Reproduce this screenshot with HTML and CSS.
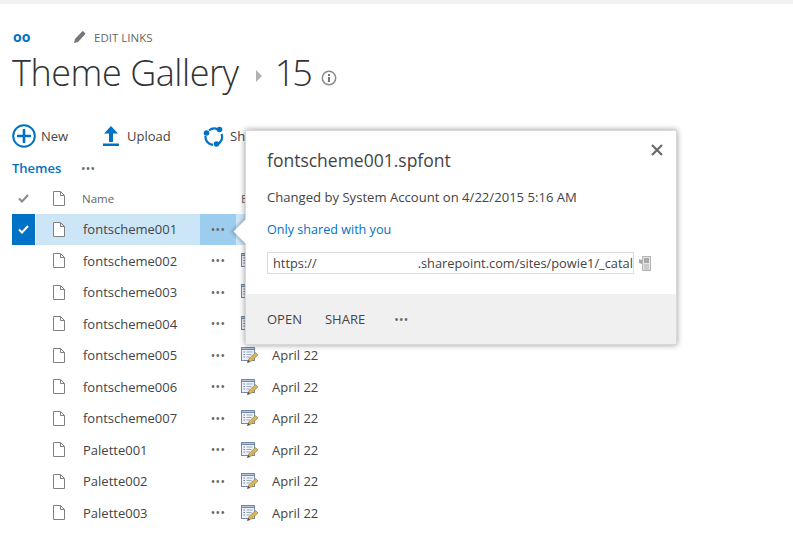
FILE: index.html
```html
<!DOCTYPE html>
<html lang="en">
  <head>
    <meta charset="UTF-8" />
    <title>Theme Gallery</title>
    <link rel="stylesheet" href="styles.css">
  </head>
  <body>
    <svg class="defs" width="0" height="0">
      <symbol id="doc" viewBox="0 0 12 15">
        <path d="M.5 .5H7.500L11.500 4.500V14.500H.5Z M7.500 .5V4.500H11.500" fill="#fff" stroke="#808080" />
      </symbol>
      <symbol id="edit" viewBox="0 0 18 18">
        <rect x=".5" y="1.5" width="13" height="13" fill="#eef2f8" stroke="#7488a8" />
        <rect x=".5" y="1.5" width="13" height="2" fill="#b4c4da" stroke="#7488a8" />
        <path d="M2.500 6h1.500M2.500 8.500h1.500M2.500 11h1.500" stroke="#6d7f9c" />
        <path d="M5.500 6h6M5.500 8.500h5M5.500 11h3" stroke="#9aa9bf" />
        <path d="M7 15.500l1-3 6.500-6 2.500 2.500-6.500 6z" fill="#d9b45a" stroke="#8f7a45" stroke-width=".6" />
        <path d="M6 17l1-3 2.300 2z" fill="#4a4a4a" />
      </symbol>
    </svg>

    <div class="top-strip"></div>

    <div class="nav">
      <span class="nav-logo">oo</span>
      <span class="edit-links">
        <svg width="14" height="14" viewBox="0 0 14 14"><path d="M1 13l1-4 7-7.500a1 1 0 0 1 1.500 0l1.500 1.500a1 1 0 0 1 0 1.500L5 12z" fill="#777" /></svg>
        EDIT LINKS
      </span>
    </div>

    <div class="title-row">
      <h1>Theme Gallery</h1>
      <svg class="crumb" width="6" height="12" viewBox="0 0 6 12"><path d="M0 0l6 6-6 6z" fill="#b1b1b1" /></svg>
      <span class="title-num">15</span>
      <svg class="info" width="16" height="16" viewBox="0 0 16 16">
        <circle cx="8" cy="8" r="6.700" fill="none" stroke="#8a8a8a" stroke-width="1.500" />
        <rect x="7" y="7" width="2" height="5" fill="#777" />
        <rect x="7" y="4" width="2" height="2" fill="#777" />
      </svg>
    </div>

    <div class="toolbar">
      <span class="tool tool-new">
        <svg width="24" height="24" viewBox="0 0 24 24">
          <circle cx="12" cy="12" r="10.800" fill="none" stroke="#0072c6" stroke-width="2" />
          <path d="M12 5v14M5 12h14" stroke="#0072c6" stroke-width="2.600" />
        </svg>
        New
      </span>
      <span class="tool tool-upload">
        <svg width="16" height="20" viewBox="0 0 16 20">
          <path d="M8 0l7 7.500h-5V16H6V7.500H1z M0 17.500h16V20H0z" fill="#0072c6" />
        </svg>
        Upload
      </span>
      <span class="tool tool-share">
        <svg width="21" height="21" viewBox="0 0 21 21">
          <path d="M6 4.500a8 8 0 0 1 9-1M18.500 8a8 8 0 0 1-3.500 10M10 18.800a8 8 0 0 1-7.500-9" fill="none" stroke="#0072c6" stroke-width="2.200" />
          <circle cx="16.500" cy="3.500" r="2.800" fill="#0072c6" />
          <circle cx="3.500" cy="7" r="2.800" fill="#0072c6" />
          <circle cx="13.500" cy="18" r="2.800" fill="#0072c6" />
        </svg>
        Sh
      </span>
    </div>

    <div class="view-row">
      <span class="view-name">Themes</span>
      <span class="dots">•••</span>
    </div>

    <div class="list">
      <div class="row row-head">
        <span class="cell-check"><svg width="11" height="9" viewBox="0 0 11 9"><path d="M1 4.500l3 3 6-6.500" fill="none" stroke="#8a8a8a" stroke-width="2" /></svg></span>
        <svg class="doc"><use href="#doc" /></svg>
        <span class="cell-name">Name</span>
        <span class="cell-edit-head">E</span>
      </div>
      <div class="row row-selected">
        <span class="cell-check"><svg width="11" height="9" viewBox="0 0 11 9"><path d="M1 4.500l3 3 6-6.500" fill="none" stroke="#fff" stroke-width="2" /></svg></span>
        <svg class="doc"><use href="#doc" /></svg>
        <span class="cell-name">fontscheme001</span>
        <span class="dots cell-dots">•••</span>
      </div>
      <div class="row">
        <span class="cell-check"></span>
        <svg class="doc"><use href="#doc" /></svg>
        <span class="cell-name">fontscheme002</span>
        <span class="dots cell-dots">•••</span>
        <svg class="edit"><use href="#edit" /></svg>
      </div>
      <div class="row">
        <span class="cell-check"></span>
        <svg class="doc"><use href="#doc" /></svg>
        <span class="cell-name">fontscheme003</span>
        <span class="dots cell-dots">•••</span>
        <svg class="edit"><use href="#edit" /></svg>
      </div>
      <div class="row">
        <span class="cell-check"></span>
        <svg class="doc"><use href="#doc" /></svg>
        <span class="cell-name">fontscheme004</span>
        <span class="dots cell-dots">•••</span>
        <svg class="edit"><use href="#edit" /></svg>
      </div>
      <div class="row">
        <span class="cell-check"></span>
        <svg class="doc"><use href="#doc" /></svg>
        <span class="cell-name">fontscheme005</span>
        <span class="dots cell-dots">•••</span>
        <svg class="edit"><use href="#edit" /></svg>
        <span class="cell-date">April 22</span>
      </div>
      <div class="row">
        <span class="cell-check"></span>
        <svg class="doc"><use href="#doc" /></svg>
        <span class="cell-name">fontscheme006</span>
        <span class="dots cell-dots">•••</span>
        <svg class="edit"><use href="#edit" /></svg>
        <span class="cell-date">April 22</span>
      </div>
      <div class="row">
        <span class="cell-check"></span>
        <svg class="doc"><use href="#doc" /></svg>
        <span class="cell-name">fontscheme007</span>
        <span class="dots cell-dots">•••</span>
        <svg class="edit"><use href="#edit" /></svg>
        <span class="cell-date">April 22</span>
      </div>
      <div class="row">
        <span class="cell-check"></span>
        <svg class="doc"><use href="#doc" /></svg>
        <span class="cell-name">Palette001</span>
        <span class="dots cell-dots">•••</span>
        <svg class="edit"><use href="#edit" /></svg>
        <span class="cell-date">April 22</span>
      </div>
      <div class="row">
        <span class="cell-check"></span>
        <svg class="doc"><use href="#doc" /></svg>
        <span class="cell-name">Palette002</span>
        <span class="dots cell-dots">•••</span>
        <svg class="edit"><use href="#edit" /></svg>
        <span class="cell-date">April 22</span>
      </div>
      <div class="row">
        <span class="cell-check"></span>
        <svg class="doc"><use href="#doc" /></svg>
        <span class="cell-name">Palette003</span>
        <span class="dots cell-dots">•••</span>
        <svg class="edit"><use href="#edit" /></svg>
        <span class="cell-date">April 22</span>
      </div>
    </div>

    <!-- callout opened from the selected row -->
    <div class="callout">
      <div class="callout-arrow"></div>
      <svg class="callout-close" width="12" height="12" viewBox="0 0 12 12"><path d="M1 1l10 10M11 1L1 11" stroke="#6a6a6a" stroke-width="2.200" /></svg>
      <div class="callout-body">
        <div class="callout-title">fontscheme001.spfont</div>
        <div class="callout-changed">Changed by System Account on 4/22/2015 5:16 AM</div>
        <div class="callout-shared">Only shared with you</div>
        <div class="url-row">
          <div class="url-box">
            <span>https://</span>
            <span class="url-rest">.sharepoint.com/sites/powie1/_catal</span>
          </div>
          <svg class="url-icon" width="12" height="15" viewBox="0 0 12 15">
            <rect x="3.500" y=".5" width="8" height="14" fill="#e6e6e6" stroke="#b4b4b4" />
            <rect x="5" y="2" width="5" height="5" fill="#a8a8a8" />
            <path d="M5 9h5M5 11h5M5 13h5" stroke="#b0b0b0" />
            <path d="M0 3l3 1v4l-3-1z" fill="#aaa" />
          </svg>
        </div>
      </div>
      <div class="callout-actions">
        <span>OPEN</span>
        <span>SHARE</span>
        <span class="dots">•••</span>
      </div>
    </div>
  </body>
</html>
```

FILE: styles.css
```css
body {
  margin: 0;
  height: 533px;
  overflow: hidden;
  position: relative;
  font-family: "Open Sans", sans-serif;
  background: #fff;
  color: #444;
}

.defs {
  position: absolute;
}

.top-strip {
  height: 4px;
  background: #f1f1f1;
}

.nav {
  display: flex;
  align-items: center;
  height: 20px;
  margin: 23px 0 0 13px;
}

.nav-logo {
  width: 60px;
  font-size: 14px;
  font-weight: 700;
  line-height: 20px;
  color: #0072c6;
}

.edit-links {
  display: flex;
  align-items: center;
  gap: 7px;
  font-size: 11.500px;
  color: #666;
}

.title-row {
  display: flex;
  align-items: center;
  height: 50px;
  margin-left: 12px;
}

.title-row h1 {
  margin: 0;
  font-size: 36px;
  font-weight: 300;
  letter-spacing: -0.45px;
  color: #333;
}

.crumb {
  margin: 8px 0 0 17px;
}

.title-num {
  margin-left: 13px;
  font-size: 36px;
  font-weight: 300;
  letter-spacing: -3px;
  color: #333;
}

.info {
  margin: 12px 0 0 11px;
}

.toolbar {
  display: flex;
  align-items: center;
  height: 26px;
  margin: 26px 0 0 12px;
  font-size: 13px;
  color: #444;
}

.tool {
  display: flex;
  align-items: center;
}

.tool-new {
  gap: 5px;
  width: 91px;
}

.tool-upload {
  gap: 8px;
  width: 100px;
}

.tool-share {
  gap: 6px;
}

.view-row {
  display: flex;
  align-items: center;
  height: 20px;
  margin: 9px 0 0 12px;
}

.view-name {
  width: 69px;
  font-size: 13px;
  font-weight: 600;
  color: #0072c6;
}

.dots {
  font-size: 12px;
  letter-spacing: 0.3px;
  color: #666;
}

.list {
  margin: 6px 0 0 12px;
}

.row {
  display: flex;
  align-items: center;
  height: 31.500px;
  font-size: 13px;
}

.row-head {
  height: 29.500px;
  font-size: 11.500px;
  color: #666;
}

.row-selected {
  background: #cde6f7;
  width: 240px;
}

.cell-check {
  display: flex;
  align-items: center;
  justify-content: center;
  flex: none;
  width: 23px;
  height: 100%;
  margin-right: 18px;
}

.row-selected .cell-check {
  background: #0072c6;
  border-right: 1px solid #fff;
}

.doc {
  flex: none;
  width: 12px;
  height: 15px;
  margin-right: 2px;
}

.row-selected .doc {
  margin-left: -1px;
}

.cell-name {
  width: 117px;
  margin-left: 16px;
  flex: none;
}

.row-head .cell-name {
  margin-left: 15px;
  width: 159px;
}

.cell-edit-head {
  flex: none;
}

.cell-dots {
  display: flex;
  align-items: center;
  justify-content: center;
  flex: none;
  width: 36px;
  height: 100%;
}

.row-selected .cell-dots {
  background: #9ccdee;
}

.edit {
  flex: none;
  width: 18px;
  height: 18px;
  margin-left: 5px;
}

.cell-date {
  margin-left: 13px;
}

.callout {
  position: absolute;
  left: 245px;
  top: 130px;
  width: 432px;
  height: 215px;
  display: flex;
  flex-direction: column;
  background: #fff;
  border: 1px solid #d8d8d8;
  box-sizing: border-box;
  box-shadow: 0 0 6px rgba(0, 0, 0, 0.4);
}

.callout-arrow {
  position: absolute;
  left: -9.500px;
  top: 92px;
  width: 17px;
  height: 17px;
  background: #fff;
  transform: rotate(45deg);
  box-shadow: -2px 2px 3px rgba(0, 0, 0, 0.18);
}

.callout-close {
  position: absolute;
  right: 13px;
  top: 13px;
}

.callout-body {
  flex: 1;
  position: relative;
  padding: 16px 0 0 21px;
}

.callout-title {
  font-size: 17.500px;
  line-height: 26px;
  color: #444;
}

.callout-changed {
  margin-top: 15px;
  font-size: 13.100px;
  line-height: 18px;
}

.callout-shared {
  margin-top: 15px;
  font-size: 12.600px;
  line-height: 18px;
  color: #0072c6;
}

.url-row {
  display: flex;
  align-items: center;
  gap: 5px;
  margin-top: 13px;
}

.url-box {
  display: flex;
  width: 367px;
  height: 22px;
  box-sizing: border-box;
  border: 1px solid #dcdcdc;
  padding-left: 5px;
  font-size: 12.800px;
  line-height: 20px;
  white-space: nowrap;
  overflow: hidden;
}

.url-rest {
  margin-left: 101px;
}

.callout-actions {
  display: flex;
  align-items: center;
  gap: 23px;
  height: 50px;
  padding-left: 21px;
  background: #f0f0f0;
  font-size: 13px;
}

.callout-actions .dots {
  margin-left: 6px;
}
```
